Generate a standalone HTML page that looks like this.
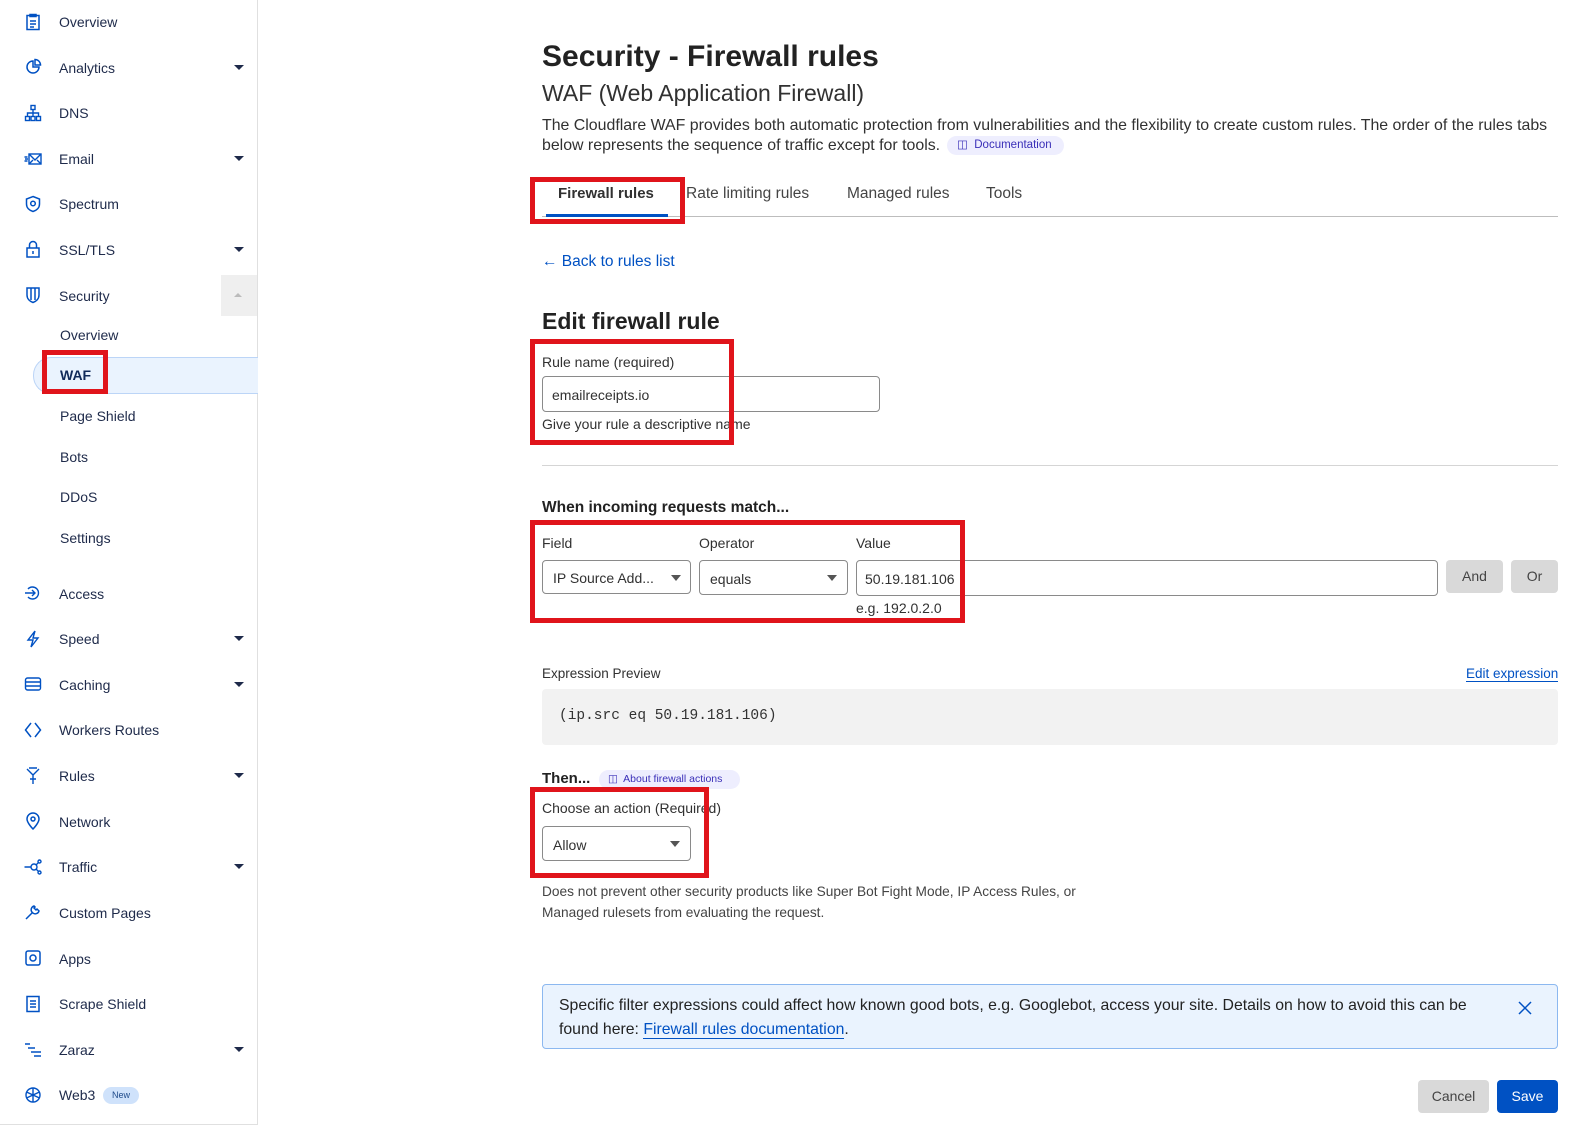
<!DOCTYPE html>
<html><head><meta charset="utf-8"><style>
*{box-sizing:border-box;margin:0;padding:0}
body{width:1581px;height:1135px;position:relative;overflow:hidden;background:#fff;font-family:"Liberation Sans",sans-serif;color:#313131}
.a{position:absolute;white-space:nowrap}
.nav{font-size:14px;color:#1e2a4a}
.ic{position:absolute;left:24px;width:18px;height:18px}
.car{position:absolute;left:234px;width:0;height:0;border-left:5px solid transparent;border-right:5px solid transparent;border-top:5px solid #1e2a4a}
.red{position:absolute;border:5px solid #e0141b}
.box{position:absolute;border:1px solid #8a8a8a;border-radius:4px;background:#fff}
.dd{position:absolute;width:0;height:0;border-left:5px solid transparent;border-right:5px solid transparent;border-top:6px solid #555}
.m{font-size:14px;color:#313131}
</style></head><body>
<div class="a" style="left:257px;top:0;width:1px;height:1125px;background:#e0e0e0"></div>
<div class="a" style="left:0;top:1124px;width:258px;height:1px;background:#e0e0e0"></div>

<!-- sidebar -->
<svg class="ic" style="top:13px" viewBox="0 0 18 18" fill="none" stroke="#0051c3" stroke-width="1.5"><rect x="3" y="2.5" width="12" height="14"/><path d="M6 1.5h6v2H6zM6 8h6M6 11h6M6 14h4"/></svg>
<div class="a nav" style="left:59px;top:14px">Overview</div>
<svg class="ic" style="top:58px" viewBox="0 0 18 18" fill="none" stroke="#0051c3" stroke-width="1.5"><path d="M9 3a6 6 0 1 0 6 6H9z"/><path d="M11 1.5a5.5 5.5 0 0 1 5.5 5.5H11z"/></svg>
<div class="a nav" style="left:59px;top:60px">Analytics</div><div class="car" style="top:65px"></div>
<svg class="ic" style="top:104px" viewBox="0 0 18 18" fill="none" stroke="#0051c3" stroke-width="1.4"><rect x="7" y="1.5" width="4" height="4"/><rect x="1.5" y="12.5" width="4" height="4"/><rect x="7" y="12.5" width="4" height="4"/><rect x="12.5" y="12.5" width="4" height="4"/><path d="M9 5.5v7M3.5 12.5V9h11v3.5"/></svg>
<div class="a nav" style="left:59px;top:105px">DNS</div>
<svg class="ic" style="top:150px" viewBox="0 0 18 18" fill="none" stroke="#0051c3" stroke-width="1.4"><rect x="5" y="4" width="12" height="10"/><path d="M5 4l6 6 6-6M5 14l4-4M17 14l-4-4M0.5 7h3M1 9h3M0.5 11h3"/></svg>
<div class="a nav" style="left:59px;top:151px">Email</div><div class="car" style="top:156px"></div>
<svg class="ic" style="top:195px" viewBox="0 0 18 18" fill="none" stroke="#0051c3" stroke-width="1.5"><path d="M9 1.5l6.5 2.5v5c0 4-3 6.5-6.5 7.5C5.5 15.5 2.5 13 2.5 9V4z"/><circle cx="9" cy="8.5" r="2.3"/></svg>
<div class="a nav" style="left:59px;top:196px">Spectrum</div>
<svg class="ic" style="top:240px" viewBox="0 0 18 18" fill="none" stroke="#0051c3" stroke-width="1.5"><rect x="3" y="8" width="12" height="9"/><path d="M5.5 8V5a3.5 3.5 0 0 1 7 0v3M9 11v3"/></svg>
<div class="a nav" style="left:59px;top:242px">SSL/TLS</div><div class="car" style="top:247px"></div>
<div class="a" style="left:221px;top:275px;width:36px;height:41px;background:#efefef"></div>
<div class="a" style="left:234px;top:293px;border-left:4px solid transparent;border-right:4px solid transparent;border-bottom:4px solid #bbb"></div>
<svg class="ic" style="top:286px" viewBox="0 0 18 18" fill="none" stroke="#0051c3" stroke-width="1.5"><path d="M3 2h12v7c0 4-3 6.5-6 7.5C6 15.5 3 13 3 9z"/><path d="M7 2v12M11 2v12"/></svg>
<div class="a nav" style="left:59px;top:288px">Security</div>
<div class="a nav" style="left:60px;top:327px">Overview</div>
<div class="a" style="left:33px;top:357px;width:225px;height:37px;background:#eaf3fe;border:1px solid #bcd5f7;border-right:none;border-radius:18px 0 0 18px"></div>
<div class="a nav" style="left:60px;top:367px;font-weight:bold;color:#112a5a">WAF</div>
<div class="red" style="left:42px;top:350px;width:66px;height:44px"></div>
<div class="a nav" style="left:60px;top:408px">Page Shield</div>
<div class="a nav" style="left:60px;top:449px">Bots</div>
<div class="a nav" style="left:60px;top:489px">DDoS</div>
<div class="a nav" style="left:60px;top:530px">Settings</div>
<svg class="ic" style="top:584px" viewBox="0 0 18 18" fill="none" stroke="#0051c3" stroke-width="1.4"><path d="M4 5a6 6 0 1 1 0 8M1 9h10M8 6l3 3-3 3"/></svg>
<div class="a nav" style="left:59px;top:586px">Access</div>
<svg class="ic" style="top:630px" viewBox="0 0 18 18" fill="none" stroke="#0051c3" stroke-width="1.4"><path d="M11 1L4 10h5l-2 7 7-9H9z"/></svg>
<div class="a nav" style="left:59px;top:631px">Speed</div><div class="car" style="top:636px"></div>
<svg class="ic" style="top:675px" viewBox="0 0 18 18" fill="none" stroke="#0051c3" stroke-width="1.4"><rect x="1.5" y="3" width="15" height="12" rx="2"/><path d="M1.5 7h15M1.5 11h15"/></svg>
<div class="a nav" style="left:59px;top:677px">Caching</div><div class="car" style="top:682px"></div>
<svg class="ic" style="top:721px" viewBox="0 0 18 18" fill="none" stroke="#0051c3" stroke-width="1.5"><path d="M7 2L1.5 9 7 16M11 2l5.5 7L11 16"/></svg>
<div class="a nav" style="left:59px;top:722px">Workers Routes</div>
<svg class="ic" style="top:767px" viewBox="0 0 18 18" fill="none" stroke="#0051c3" stroke-width="1.4"><path d="M3 2l6 6 6-6M9 8v9M5 1h8M6 12h6"/></svg>
<div class="a nav" style="left:59px;top:768px">Rules</div><div class="car" style="top:773px"></div>
<svg class="ic" style="top:812px" viewBox="0 0 18 18" fill="none" stroke="#0051c3" stroke-width="1.5"><path d="M9 17s-6-6-6-10a6 6 0 0 1 12 0c0 4-6 10-6 10z"/><circle cx="9" cy="7" r="2"/></svg>
<div class="a nav" style="left:59px;top:814px">Network</div>
<svg class="ic" style="top:858px" viewBox="0 0 18 18" fill="none" stroke="#0051c3" stroke-width="1.4"><circle cx="10" cy="9" r="3"/><circle cx="15.5" cy="3.5" r="1.5"/><circle cx="15.5" cy="14.5" r="1.5"/><path d="M0.5 9h6.5M12 7l2.5-2.5M12 11l2.5 2.5"/></svg>
<div class="a nav" style="left:59px;top:859px">Traffic</div><div class="car" style="top:864px"></div>
<svg class="ic" style="top:903px" viewBox="0 0 18 18" fill="none" stroke="#0051c3" stroke-width="1.5"><path d="M2 16l7-7M10 3a4 4 0 1 0 5 5l-2-2-1 1-2-2 1-1z"/></svg>
<div class="a nav" style="left:59px;top:905px">Custom Pages</div>
<svg class="ic" style="top:949px" viewBox="0 0 18 18" fill="none" stroke="#0051c3" stroke-width="1.5"><rect x="2" y="2" width="14" height="14" rx="2"/><circle cx="9" cy="9" r="3"/></svg>
<div class="a nav" style="left:59px;top:951px">Apps</div>
<svg class="ic" style="top:995px" viewBox="0 0 18 18" fill="none" stroke="#0051c3" stroke-width="1.5"><rect x="3" y="1.5" width="12" height="15"/><path d="M6 6h6M6 9h6M6 12h6"/></svg>
<div class="a nav" style="left:59px;top:996px">Scrape Shield</div>
<svg class="ic" style="top:1040px" viewBox="0 0 18 18" fill="none" stroke="#0051c3" stroke-width="1.5"><path d="M1 4h5M4 8h7M7 12h10M10 16h7"/></svg>
<div class="a nav" style="left:59px;top:1042px">Zaraz</div><div class="car" style="top:1047px"></div>
<svg class="ic" style="top:1086px" viewBox="0 0 18 18" fill="none" stroke="#0051c3" stroke-width="1.4"><circle cx="9" cy="9" r="7"/><path d="M9 2v14M2.5 6l13 6M2.5 12l13-6"/></svg>
<div class="a nav" style="left:59px;top:1087px">Web3</div>
<div class="a" style="left:103px;top:1087px;width:36px;height:17px;border-radius:9px;background:#cfe2fb;color:#1e4a8a;font-size:9px;line-height:17px;text-align:center">New</div>

<!-- main -->
<div class="a" style="left:542px;top:40px;font-size:30px;font-weight:bold;color:#222">Security - Firewall rules</div>
<div class="a" style="left:542px;top:80px;font-size:23px;color:#313131">WAF (Web Application Firewall)</div>
<div class="a m" style="left:542px;top:116px;font-size:15.9px;line-height:20px">The Cloudflare WAF provides both automatic protection from vulnerabilities and the flexibility to create custom rules. The order of the rules tabs<br>below represents the sequence of traffic except for tools.</div>
<div class="a" style="left:947px;top:136px;width:117px;height:19px;border-radius:10px;background:#eeeefe;color:#3a2fb8;font-size:11.5px;line-height:19px;padding-left:10px">&#9707;&nbsp; Documentation</div>

<div class="a" style="left:542px;top:216px;width:1016px;height:1px;background:#bdbdbd"></div>
<div class="a" style="left:558px;top:185px;font-size:15px;font-weight:bold;color:#313131">Firewall rules</div>
<div class="a" style="left:546px;top:214px;width:122px;height:3px;background:#0051c3"></div>
<div class="a" style="left:686px;top:185px;font-size:15.5px;color:#444">Rate limiting rules</div>
<div class="a" style="left:847px;top:185px;font-size:15.5px;color:#444">Managed rules</div>
<div class="a" style="left:986px;top:185px;font-size:15.5px;color:#444">Tools</div>
<div class="red" style="left:530px;top:177px;width:155px;height:47px"></div>

<div class="a" style="left:542px;top:253px;font-size:15.5px;color:#0051c3">&larr; Back to rules list</div>

<div class="a" style="left:542px;top:308px;font-size:23px;font-weight:bold;color:#222">Edit firewall rule</div>
<div class="a m" style="left:542px;top:354px">Rule name (required)</div>
<div class="box" style="left:542px;top:376px;width:338px;height:36px"></div>
<div class="a m" style="left:552px;top:387px">emailreceipts.io</div>
<div class="a m" style="left:542px;top:416px">Give your rule a descriptive name</div>
<div class="red" style="left:530px;top:339px;width:204px;height:106px;border-bottom-width:5px"></div>

<div class="a" style="left:542px;top:465px;width:1016px;height:1px;background:#d5d5d5"></div>
<div class="a" style="left:542px;top:499px;font-size:15.5px;font-weight:bold;color:#222">When incoming requests match...</div>
<div class="a m" style="left:542px;top:535px">Field</div>
<div class="a m" style="left:699px;top:535px">Operator</div>
<div class="a m" style="left:856px;top:535px">Value</div>
<div class="box" style="left:542px;top:560px;width:149px;height:34px"></div>
<div class="a m" style="left:553px;top:570px">IP Source Add...</div><div class="dd" style="left:671px;top:575px"></div>
<div class="box" style="left:699px;top:560px;width:149px;height:35px"></div>
<div class="a m" style="left:710px;top:571px">equals</div><div class="dd" style="left:827px;top:575px"></div>
<div class="box" style="left:856px;top:560px;width:582px;height:36px"></div>
<div class="a m" style="left:865px;top:571px">50.19.181.106</div>
<div class="a m" style="left:856px;top:600px">e.g. 192.0.2.0</div>
<div class="a" style="left:1446px;top:560px;width:57px;height:33px;background:#d9d9d9;border-radius:4px;font-size:14px;line-height:33px;text-align:center;color:#444">And</div>
<div class="a" style="left:1511px;top:560px;width:47px;height:33px;background:#d9d9d9;border-radius:4px;font-size:14px;line-height:33px;text-align:center;color:#444">Or</div>
<div class="red" style="left:530px;top:520px;width:435px;height:103px"></div>

<div class="a m" style="left:542px;top:666px;font-size:13.5px">Expression Preview</div>
<div class="a" style="left:1466px;top:666px;font-size:13.5px;color:#0051c3;border-bottom:1px solid #0051c3">Edit expression</div>
<div class="a" style="left:542px;top:689px;width:1016px;height:56px;background:#f2f2f2;border-radius:4px"></div>
<div class="a" style="left:559px;top:708px;font-family:'Liberation Mono',monospace;font-size:14.5px;color:#333">(ip.src eq 50.19.181.106)</div>

<div class="a" style="left:542px;top:770px;font-size:15px;font-weight:bold;color:#222">Then...</div>
<div class="a" style="left:599px;top:770px;width:141px;height:19px;border-radius:10px;background:#eeeefe;color:#3a2fb8;font-size:10.5px;line-height:19px;padding-left:9px">&#9707;&nbsp; About firewall actions</div>
<div class="a m" style="left:542px;top:800px">Choose an action (Required)</div>
<div class="box" style="left:542px;top:826px;width:149px;height:35px"></div>
<div class="a m" style="left:553px;top:837px">Allow</div><div class="dd" style="left:670px;top:841px"></div>
<div class="red" style="left:530px;top:787px;width:179px;height:91px"></div>
<div class="a" style="left:542px;top:881px;font-size:13.7px;line-height:21px;color:#444">Does not prevent other security products like Super Bot Fight Mode, IP Access Rules, or<br>Managed rulesets from evaluating the request.</div>

<div class="a" style="left:542px;top:984px;width:1016px;height:65px;background:#eaf3fe;border:1px solid #8cb8f0;border-radius:4px"></div>
<div class="a" style="left:559px;top:994px;font-size:15.8px;line-height:24px;color:#222">Specific filter expressions could affect how known good bots, e.g. Googlebot, access your site. Details on how to avoid this can be<br>found here: <span style="color:#0051c3;border-bottom:1px solid #0051c3">Firewall rules documentation</span>.</div>
<svg class="a" style="left:1518px;top:1001px" width="14" height="14" viewBox="0 0 14 14" stroke="#0051c3" stroke-width="1.5"><path d="M1 1l12 12M13 1L1 13"/></svg>

<div class="a" style="left:1418px;top:1080px;width:71px;height:33px;background:#d9d9d9;border-radius:4px;font-size:14px;line-height:33px;text-align:center;color:#444">Cancel</div>
<div class="a" style="left:1497px;top:1080px;width:61px;height:33px;background:#0051c3;border-radius:4px;font-size:14px;line-height:33px;text-align:center;color:#fff">Save</div>
</body></html>
